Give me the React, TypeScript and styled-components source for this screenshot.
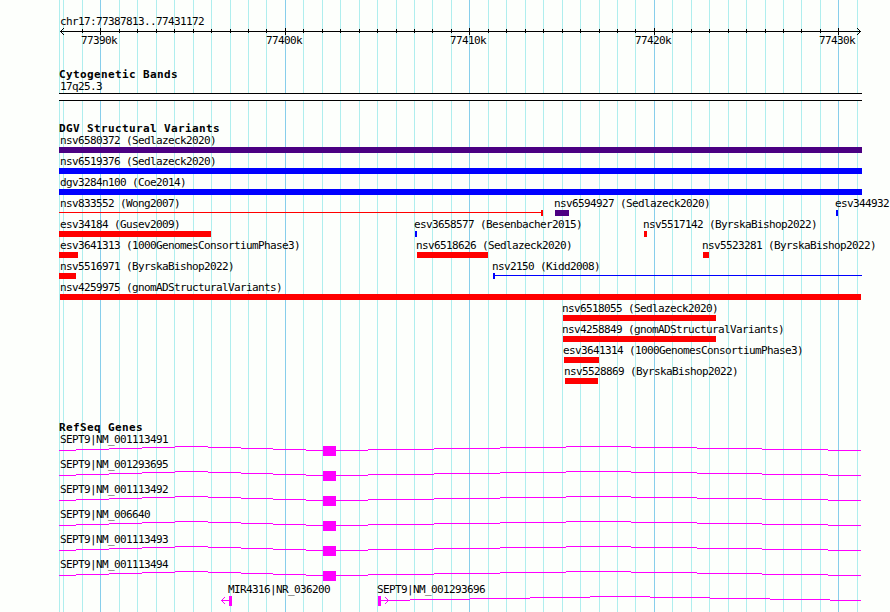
import { createGlobalStyle, styled } from "styled-components";

const ORIGIN = 59; // left edge of the drawn region
const WIDTH = 803;

const RED = "#ff0000";
const BLUE = "#0000ff";
const INDIGO = "#4b0082";
const MAGENTA = "#ff00ff";

const GlobalStyle = createGlobalStyle`
  html, body {
    margin: 0;
    padding: 0;
    background: #fdfffc;
    overflow: hidden;
  }
`;
const Wrapper = styled.main`
  position: relative;
  width: 890px;
  height: 612px;
  overflow: hidden;
  color: #000;
  background: #fdfffc;
  font-family: "DejaVu Sans Mono", monospace;
`;
const GridLines = styled.svg`
  position: absolute;
  top: 0;
  left: 0;
`;
const Panel = styled.div`
  position: relative;
  display: flex;
  flex-direction: column;
  padding-left: ${ORIGIN}px;
`;
const Header = styled.header`
  height: 68px;
  padding-top: 16px;
  box-sizing: border-box;
`;
const Track = styled.section<{ $height: number }>`
  height: ${({ $height }) => $height}px;
`;
const Title = styled.h2`
  margin: 0;
  height: 13px;
  font-size: 11px;
  font-weight: 700;
  line-height: 13px;
  letter-spacing: 0.378px;
  white-space: pre;
`;
const Label = styled.span<{ $inset?: number }>`
  display: block;
  height: 12px;
  margin-left: ${({ $inset = 1 }) => $inset}px;
  font-size: 11px;
  line-height: 12px;
  letter-spacing: -0.622px;
  white-space: pre;
`;
const Ruler = styled.svg`
  display: block;
`;
const RulerLabels = styled.div`
  display: grid;
`;
const RulerLabel = styled(Label)`
  grid-area: 1 / 1;
`;
const Band = styled.div`
  width: ${WIDTH}px;
  height: 8px;
  box-sizing: border-box;
  border-top: 1px solid #000;
  border-bottom: 1px solid #000;
  background: #fff;
`;
const Row = styled.div<{ $height: number }>`
  display: grid;
  height: ${({ $height }) => $height}px;
`;
const Feature = styled.div<{ $start: number }>`
  grid-area: 1 / 1;
  margin-left: ${({ $start }) => $start - ORIGIN}px;
`;
const Bar = styled.div<{ $width: number; $color: string }>`
  width: ${({ $width }) => $width}px;
  height: 6px;
  background: ${({ $color }) => $color};
`;
const Glyph = styled.svg`
  display: block;
  overflow: visible;
`;

interface IVariant {
  name: string;
  start: number;
  end: number;
  color: string;
  // side of the solid block when the rest is a thin line
  thin?: "left" | "right";
}

const variantRows: IVariant[][] = [
  [{ name: "nsv6580372 (Sedlazeck2020)", start: 59, end: 862, color: INDIGO }],
  [{ name: "nsv6519376 (Sedlazeck2020)", start: 59, end: 862, color: BLUE }],
  [{ name: "dgv3284n100 (Coe2014)", start: 59, end: 862, color: BLUE }],
  [
    { name: "nsv833552 (Wong2007)", start: 59, end: 543, color: RED, thin: "right" },
    { name: "nsv6594927 (Sedlazeck2020)", start: 555, end: 569, color: INDIGO },
    { name: "esv344932", start: 836, end: 838, color: BLUE },
  ],
  [
    { name: "esv34184 (Gusev2009)", start: 59, end: 211, color: RED },
    { name: "esv3658577 (Besenbacher2015)", start: 415, end: 417, color: BLUE },
    { name: "nsv5517142 (ByrskaBishop2022)", start: 644, end: 647, color: RED },
  ],
  [
    { name: "esv3641313 (1000GenomesConsortiumPhase3)", start: 59, end: 78, color: RED },
    { name: "nsv6518626 (Sedlazeck2020)", start: 417, end: 488, color: RED },
    { name: "nsv5523281 (ByrskaBishop2022)", start: 703, end: 709, color: RED },
  ],
  [
    { name: "nsv5516971 (ByrskaBishop2022)", start: 59, end: 76, color: RED },
    { name: "nsv2150 (Kidd2008)", start: 493, end: 862, color: BLUE, thin: "left" },
  ],
  [{ name: "nsv4259975 (gnomADStructuralVariants)", start: 60, end: 861, color: RED }],
  [{ name: "nsv6518055 (Sedlazeck2020)", start: 563, end: 716, color: RED }],
  [{ name: "nsv4258849 (gnomADStructuralVariants)", start: 563, end: 716, color: RED }],
  [{ name: "esv3641314 (1000GenomesConsortiumPhase3)", start: 564, end: 599, color: RED }],
  [{ name: "nsv5528869 (ByrskaBishop2022)", start: 565, end: 598, color: RED }],
];

const transcripts = [
  "NM_001113491",
  "NM_001293695",
  "NM_001113492",
  "NM_006640",
  "NM_001113493",
  "NM_001113494",
];

const gridXs = [
  59, 63, 82, 100, 119, 137, 156, 174, 193, 211, 230, 248, 266, 285, 303, 322,
  340, 359, 377, 396, 414, 432, 451, 469, 488, 506, 525, 543, 562, 580, 599,
  617, 635, 654, 672, 691, 709, 728, 746, 765, 783, 801, 820, 838, 857,
];
const majorXs = [100, 285, 469, 654, 838];

// [start, end, y] runs of an intron line
type Run = [number, number, number];
const intronRuns: Run[] = [
  [59, 76, 4], [76, 109, 3], [109, 142, 2], [142, 175, 1], [175, 208, 0],
  [208, 241, 1], [241, 273, 2], [273, 306, 3], [306, 323, 4],
  [336, 368, 4], [368, 434, 3], [434, 500, 2], [500, 566, 1], [566, 631, 0],
  [631, 697, 1], [697, 762, 2], [762, 828, 3], [828, 861, 4],
];
const lastRuns: Run[] = [
  [381, 410, 4], [410, 470, 3], [470, 530, 2], [530, 590, 1], [590, 650, 0],
  [650, 710, 1], [710, 770, 2], [770, 830, 3], [830, 861, 4],
];

function Intron({ runs, from }: { runs: Run[]; from: number }) {
  return (
    <>
      {runs.map(([start, end, y]) => (
        <rect key={start} x={start - from} y={y} width={end - start} height="1" />
      ))}
    </>
  );
}

function Variant({ name, start, end, color, thin }: IVariant) {
  const width = end - start;
  // labels never go past the left edge of the region
  const inset = Math.max(ORIGIN + 1, start - 1) - start;
  return (
    <Feature $start={start}>
      <Label $inset={inset}>{name}</Label>
      {thin ? (
        <Glyph width={width} height="6" fill={color} shapeRendering="crispEdges">
          <rect y="2" width={width} height="1" />
          <rect x={thin === "left" ? 0 : width - 2} width="2" height="6" />
        </Glyph>
      ) : (
        <Bar $width={width} $color={color} />
      )}
    </Feature>
  );
}

export default function App() {
  return (
    <Wrapper>
      <GlobalStyle />
      <GridLines width="890" height="612" shapeRendering="crispEdges">
        {gridXs.map((x) => (
          <rect
            key={x}
            x={x}
            width="1"
            height="612"
            fill={majorXs.includes(x) ? "#87ceeb" : "#afeeee"}
          />
        ))}
      </GridLines>
      <Panel>
        <Header>
          <Label>chr17:77387813..77431172</Label>
          <Ruler width={WIDTH} height="7" shapeRendering="crispEdges">
            <rect x="1" y="3" width="801" height="1" />
            <path d="M2 2h1v1h-1zM3 1h1v1h-1zM4 0h1v1h-1zM2 4h1v1h-1zM3 5h1v1h-1zM4 6h1v1h-1z" />
            <path d="M800 2h1v1h-1zM799 1h1v1h-1zM798 0h1v1h-1zM800 4h1v1h-1zM799 5h1v1h-1zM798 6h1v1h-1z" />
            {gridXs.slice(2, -1).map((x) =>
              majorXs.includes(x) ? (
                <rect key={x} x={x - ORIGIN} y="0" width="1" height="7" />
              ) : (
                <rect key={x} x={x - ORIGIN} y="1" width="1" height="4" />
              )
            )}
          </Ruler>
          <RulerLabels>
            {majorXs.map((x, i) => (
              <RulerLabel key={x} $inset={x - ORIGIN - 19}>
                {77390 + i * 10}k
              </RulerLabel>
            ))}
          </RulerLabels>
        </Header>
        <Track $height={54}>
          <Title>Cytogenetic Bands</Title>
          <Label>17q25.3</Label>
          <Band />
        </Track>
        <Track $height={299}>
          <Title>DGV Structural Variants</Title>
          {variantRows.map((row) => (
            <Row key={row[0].name} $height={21}>
              {row.map((variant) => (
                <Variant key={variant.name} {...variant} />
              ))}
            </Row>
          ))}
        </Track>
        <Track $height={191}>
          <Title>RefSeq Genes</Title>
          {transcripts.map((id) => (
            <Row key={id} $height={25}>
              <Feature $start={ORIGIN}>
                <Label>SEPT9|{id}</Label>
                <Glyph width={WIDTH} height="10" fill={MAGENTA} shapeRendering="crispEdges">
                  <Intron runs={intronRuns} from={ORIGIN} />
                  <rect x="264" width="13" height="10" />
                </Glyph>
              </Feature>
            </Row>
          ))}
          <Row $height={25}>
            <Feature $start={229}>
              <Label $inset={-1}>MIR4316|NR_036200</Label>
              <Glyph width="3" height="10" fill={MAGENTA} shapeRendering="crispEdges">
                <rect width="3" height="10" />
                <rect x="-8" y="4" width="8" height="1" />
                <path d="M-7 3h1v1h-1zM-6 2h1v1h-1zM-5 1h1v1h-1zM-7 5h1v1h-1zM-6 6h1v1h-1zM-5 7h1v1h-1z" />
              </Glyph>
            </Feature>
            <Feature $start={378}>
              <Label $inset={-1}>SEPT9|NM_001293696</Label>
              <Glyph width="483" height="10" fill={MAGENTA} shapeRendering="crispEdges">
                <rect width="3" height="10" />
                <Intron runs={lastRuns} from={378} />
                <path d="M9 3h1v1h-1zM8 2h1v1h-1zM7 1h1v1h-1zM9 5h1v1h-1zM8 6h1v1h-1zM7 7h1v1h-1z" />
              </Glyph>
            </Feature>
          </Row>
        </Track>
      </Panel>
    </Wrapper>
  );
}
